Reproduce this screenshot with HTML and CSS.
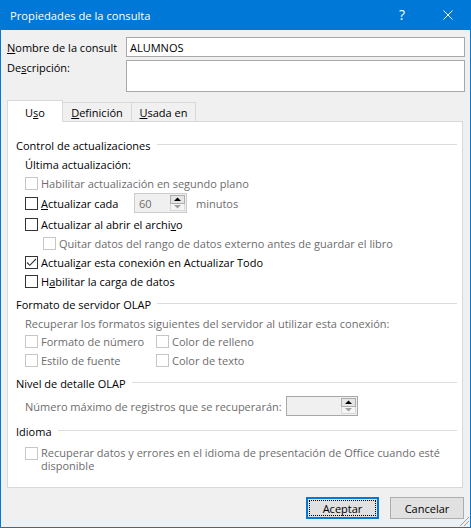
FILE: index.html
```html
<!DOCTYPE html>
<html lang="es">
<head>
<meta charset="utf-8">
<title>Propiedades de la consulta</title>
<link rel="stylesheet" href="styles.css">
</head>
<body>
<div class="window">
  <div class="titlebar">
    <div class="title">Propiedades de la consulta</div>
    <div class="cap-btn help">?</div>
    <div class="cap-btn close"><svg width="10" height="10" viewBox="0 0 10 10"><path d="M0.5 0.5L9.5 9.5M9.5 0.5L0.5 9.5" stroke="#fff" stroke-width="1" fill="none"/></svg></div>
  </div>
  <div class="body">
    <div class="field-row name-row">
      <span class="field-label"><u>N</u>ombre de la consult</span>
      <div class="textbox">ALUMNOS</div>
    </div>
    <div class="field-row desc-row">
      <span class="field-label">De<u>s</u>cripción:</span>
      <div class="textarea"></div>
    </div>

    <div class="tabs">
      <div class="tab active tab-uso">U<u>s</u>o</div>
      <div class="tab tab-def"><u>D</u>efinición</div>
      <div class="tab tab-usada"><u>U</u>sada en</div>
    </div>

    <div class="panel">
      <div class="group-title"><span>Control de actualizaciones</span></div>
      <div class="sub-label row-19">Última actualización:</div>
      <div class="check disabled row-18"><span class="cb"></span><span>Habilitar actualización en segundo plano</span></div>
      <div class="check row-22">
        <span class="cb"></span><span class="spin-label"><u>A</u>ctualizar cada</span>
        <div class="spin spin-minutes">
          <span class="spin-val">60</span>
          <div class="spin-btns">
            <span class="spin-up"><svg width="7" height="4" viewBox="0 0 7 4"><path d="M0 4L3.5 0.5L7 4Z" fill="#000"/></svg></span>
            <span class="spin-down"><svg width="7" height="4" viewBox="0 0 7 4"><path d="M0 0L3.5 3.5L7 0Z" fill="#a0a0a0"/></svg></span>
          </div>
        </div>
        <span class="muted minutes">minutos</span>
      </div>
      <div class="check row-20"><span class="cb"></span><span>Actualizar al abrir el archi<u>v</u>o</span></div>
      <div class="check disabled indent row-18"><span class="cb"></span><span>Quitar datos del rango de datos externo antes de guardar el libro</span></div>
      <div class="check row-20"><span class="cb checked"><svg width="11" height="11" viewBox="0 0 11 11"><path d="M1 5.5L3.8 8.3L10 2" stroke="#333" stroke-width="1.1" fill="none"/></svg></span><span>Actuali<u>z</u>ar esta conexión en Actualizar Todo</span></div>
      <div class="check row-18"><span class="cb"></span><span>H<u>a</u>bilitar la carga de datos</span></div>

      <div class="group-title gap-4"><span>Formato de servidor OLAP</span></div>
      <div class="sub-label muted row-19">Recuperar los formatos siguientes del servidor al utilizar esta conexión:</div>
      <div class="check-pair row-17">
        <div class="check disabled pair-first"><span class="cb"></span><span>Formato de número</span></div>
        <div class="check disabled pair-second"><span class="cb"></span><span>Color de relleno</span></div>
      </div>
      <div class="check-pair row-20">
        <div class="check disabled pair-first"><span class="cb"></span><span>Estilo de fuente</span></div>
        <div class="check disabled pair-second"><span class="cb"></span><span>Color de texto</span></div>
      </div>

      <div class="group-title gap-3"><span>Nivel de detalle OLAP</span></div>
      <div class="num-row">
        <span class="muted num-label">Número máximo de registros que se recuperarán:</span>
        <div class="spin spin-records">
          <span class="spin-val"></span>
          <div class="spin-btns">
            <span class="spin-up"><svg width="7" height="4" viewBox="0 0 7 4"><path d="M0 4L3.5 0.5L7 4Z" fill="#000"/></svg></span>
            <span class="spin-down"><svg width="7" height="4" viewBox="0 0 7 4"><path d="M0 0L3.5 3.5L7 0Z" fill="#a0a0a0"/></svg></span>
          </div>
        </div>
      </div>

      <div class="group-title gap-5"><span>Idioma</span></div>
      <div class="check disabled multi"><span class="cb"></span><span class="multi-text">Recuperar datos y errores en el idioma de presentación de Office cuando esté disponible</span></div>
    </div>

    <div class="buttons">
      <div class="btn btn-default"><span class="focus-ring">Aceptar</span></div>
      <div class="btn">Cancelar</div>
    </div>
  </div>
  <svg class="grip" width="11" height="11" viewBox="0 0 11 11">
    <rect x="9" y="1" width="1" height="1" fill="#a0a0a0"/>
    <rect x="8" y="2" width="1" height="1" fill="#a0a0a0"/>
    <rect x="7" y="3" width="1" height="1" fill="#a0a0a0"/>
    <rect x="6" y="4" width="1" height="1" fill="#a0a0a0"/>
    <rect x="5" y="5" width="1" height="1" fill="#a0a0a0"/>
    <rect x="4" y="6" width="1" height="1" fill="#a0a0a0"/>
    <rect x="3" y="7" width="1" height="1" fill="#a0a0a0"/>
    <rect x="2" y="8" width="1" height="1" fill="#a0a0a0"/>
    <rect x="1" y="9" width="1" height="1" fill="#a0a0a0"/>
    <rect x="9" y="5" width="1" height="1" fill="#a0a0a0"/>
    <rect x="8" y="6" width="1" height="1" fill="#a0a0a0"/>
    <rect x="7" y="7" width="1" height="1" fill="#a0a0a0"/>
    <rect x="6" y="8" width="1" height="1" fill="#a0a0a0"/>
    <rect x="5" y="9" width="1" height="1" fill="#a0a0a0"/>
  </svg>
</div>
</body>
</html>
```
FILE: styles.css
```css
* { box-sizing: border-box; }
html, body { margin: 0; padding: 0; }
body {
  font-family: "Open Sans", "Noto Sans", sans-serif;
  font-size: 11px;
  color: #000;
  background: #f0f0f0;
}
u { text-decoration: underline; text-underline-offset: 1px; }

.window {
  position: relative;
  width: 471px;
  height: 528px;
  border: 1px solid #0078d7;
  border-top: 0;
  background: #f0f0f0;
  display: flex;
  flex-direction: column;
}

.titlebar {
  height: 30px;
  background: #0078d7;
  color: #fff;
  display: flex;
  align-items: center;
}
.title { flex: 1; padding-left: 9px; font-size: 11.2px; }
.cap-btn {
  width: 46px;
  height: 30px;
  display: flex;
  align-items: center;
  justify-content: center;
}
.help { font-size: 14px; padding-bottom: 1px; }
.close { width: 45px; }

.body {
  flex: 1;
  padding: 7px 0 0 6px;
  display: flex;
  flex-direction: column;
}

.field-row { display: flex; margin-right: 5px; }
.field-label { width: 119px; line-height: 15px; white-space: nowrap; overflow: hidden; }
.name-row { height: 20px; align-items: center; }
.textbox {
  flex: 1;
  height: 20px;
  border: 1px solid #a8a8a8;
  background: #fff;
  padding-left: 3px;
  display: flex;
  align-items: center;
}
.desc-row { margin-top: 3px; }
.textarea { flex: 1; height: 32px; border: 1px solid #a8a8a8; background: #fff; }

.tabs {
  display: flex;
  align-items: flex-end;
  height: 21px;
  margin-top: 8px;
  position: relative;
  z-index: 1;
}
.tab {
  height: 19px;
  padding-top: 1px;
  border: 1px solid #d9d9d9;
  border-left: 0;
  border-bottom: 0;
  background: #f0f0f0;
  display: flex;
  align-items: center;
  justify-content: center;
}
.tab.active {
  height: 22px;
  margin-bottom: -1px;
  background: #fff;
  border-left: 1px solid #d9d9d9;
}
.tab-uso { width: 56px; }
.tab-def { width: 69px; }
.tab-usada { width: 64px; }

.panel {
  width: 456px;
  height: 367px;
  border: 1px solid #d9d9d9;
  background: #fff;
  padding: 13px 5px 0 8px;
  display: flex;
  flex-direction: column;
}

.group-title {
  height: 20px;
  display: flex;
  align-items: center;
  white-space: nowrap;
}
.group-title::after {
  content: "";
  flex: 1;
  height: 1px;
  background: #dcdcdc;
  margin-left: 6px;
  margin-top: -1px;
}
.gap-3 { margin-top: 3px; }
.gap-4 { margin-top: 4px; }
.gap-5 { margin-top: 5px; }

.sub-label { padding-left: 9px; display: flex; align-items: center; white-space: nowrap; }
.muted { color: #6d6d6d; }
.disabled { color: #6d6d6d; }

.row-17 { height: 17px; }
.row-18 { height: 18px; }
.row-19 { height: 19px; }
.row-20 { height: 20px; }
.row-22 { height: 22px; }

.check {
  display: flex;
  align-items: center;
  padding-left: 9px;
  white-space: nowrap;
}
.check.indent { padding-left: 27px; }
.cb {
  flex: none;
  width: 13px;
  height: 13px;
  border: 1px solid #333;
  background: #fff;
  margin-right: 3px;
  display: flex;
  align-items: center;
  justify-content: center;
}
.disabled .cb { border-color: #c6c6c6; }

.spin-label { width: 93px; }
.spin {
  display: flex;
  height: 20px;
  background: #f0f0f0;
}
.spin-minutes { width: 53px; border: 1px solid #cccccc; }
.spin-records { width: 72px; border: 1px solid #a8a8a8; }
.spin-val { flex: 1; padding-left: 4px; color: #6d6d6d; display: flex; align-items: center; }
.spin-btns {
  width: 15px;
  margin: 1px 1px 1px 0;
  display: flex;
  flex-direction: column;
}
.spin-up, .spin-down {
  flex: 1;
  display: flex;
  align-items: center;
  justify-content: center;
}
.spin-up { border: 1px solid #adadad; background: #e5e5e5; }
.spin-down { border: 1px solid #d9d9d9; border-top: 0; background: #f5f5f5; }
.minutes { margin-left: 9px; }

.check-pair { display: flex; align-items: center; }
.pair-first { width: 140px; }
.pair-second { padding-left: 0; }

.num-row {
  height: 20px;
  margin-top: 3px;
  padding-left: 9px;
  display: flex;
  align-items: center;
  white-space: nowrap;
}
.num-label { width: 261px; }

.check.multi {
  align-items: flex-start;
  margin-top: 5px;
  white-space: normal;
}
.check.multi .cb { margin-top: 1px; }
.multi-text { line-height: 13px; flex: 1; }

.buttons {
  display: flex;
  justify-content: flex-end;
  gap: 11px;
  margin-top: 9px;
  padding-right: 6px;
}
.btn {
  width: 74px;
  height: 22px;
  border: 1px solid #adadad;
  background: #e1e1e1;
  display: flex;
  align-items: center;
  justify-content: center;
}
.btn-default {
  width: 73px;
  border: 2px solid #0078d7;
  padding: 1px;
}
.focus-ring {
  width: 100%;
  height: 100%;
  border: 1px dotted #000;
  display: flex;
  align-items: center;
  justify-content: center;
}

.grip { position: absolute; right: 0; bottom: 0; }
```
